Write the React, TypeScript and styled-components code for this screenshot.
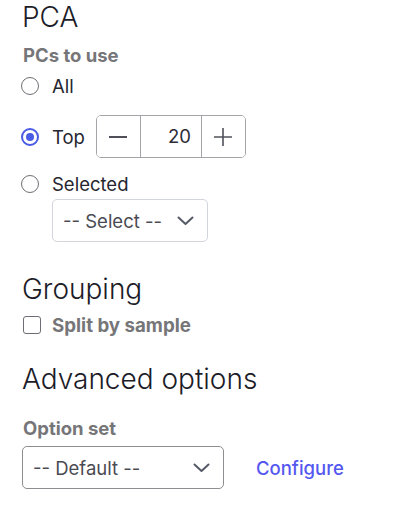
import styled, { createGlobalStyle } from "styled-components";

const GlobalStyle = createGlobalStyle`
  html, body {
    margin: 0;
    padding: 0;
    background: #ffffff;
  }
  body {
    font-family: Inter, "Noto Sans", "Liberation Sans", sans-serif;
    color: #22222e;
  }
`;

const Chevron = () => (
  <svg width="17" height="10" viewBox="0 0 17 10" fill="none">
    <polyline
      points="1.5,1.5 8.5,8 15.5,1.5"
      stroke="#555a66"
      strokeWidth="2"
      strokeLinecap="round"
      strokeLinejoin="round"
    />
  </svg>
);

const App = () => {
  return (
    <Page>
      <GlobalStyle />
      <Heading>PCA</Heading>
      <FieldLabel $top={10}>PCs to use</FieldLabel>

      <RadioRow $top={8}>
        <Radio />
        <OptionText>All</OptionText>
      </RadioRow>

      <RadioRow $top={17}>
        <Radio $checked />
        <OptionText>Top</OptionText>
        <Stepper>
          <StepButton aria-label="decrease">
            <svg width="18" height="18" viewBox="0 0 18 18">
              <line x1="0" y1="9" x2="18" y2="9" stroke="#50505a" strokeWidth="2" />
            </svg>
          </StepButton>
          <StepValue>20</StepValue>
          <StepButton aria-label="increase">
            <svg width="18" height="18" viewBox="0 0 18 18">
              <line x1="0" y1="9" x2="18" y2="9" stroke="#50505a" strokeWidth="1.6" />
              <line x1="9" y1="0" x2="9" y2="18" stroke="#50505a" strokeWidth="1.6" />
            </svg>
          </StepButton>
        </Stepper>
      </RadioRow>

      <RadioRow $top={14}>
        <Radio />
        <OptionText>Selected</OptionText>
      </RadioRow>

      <SelectBox $width={156} $light $indent={30} $top={3}>
        <span>-- Select --</span>
        <Chevron />
      </SelectBox>

      <Heading $top={30}>Grouping</Heading>
      <CheckRow $top={8}>
        <Checkbox />
        <CheckText>Split by sample</CheckText>
      </CheckRow>

      <Heading $top={26}>Advanced options</Heading>
      <FieldLabel $top={21}>Option set</FieldLabel>
      <SelectRow>
        <SelectBox $width={202}>
          <span>-- Default --</span>
          <Chevron />
        </SelectBox>
        <Link href="#">Configure</Link>
      </SelectRow>
    </Page>
  );
};

export default App;

const Page = styled.div`
  display: flex;
  flex-direction: column;
  align-items: flex-start;
  padding: 0 22px 20px 22px;
`;

const Heading = styled.h2<{ $top?: number }>`
  margin: ${({ $top }) => $top ?? 0}px 0 0 0;
  font-size: 28px;
  line-height: 34px;
  font-weight: 300;
  color: #1c1c28;
`;

const FieldLabel = styled.div<{ $top: number }>`
  margin-top: ${({ $top }) => $top}px;
  font-size: 18.5px;
  line-height: 22px;
  font-weight: 700;
  color: #767679;
  padding-left: 1px;
`;

const RadioRow = styled.div<{ $top: number }>`
  display: flex;
  align-items: center;
  margin-top: ${({ $top }) => $top}px;
  min-height: 24px;
`;

const Radio = styled.span<{ $checked?: boolean }>`
  box-sizing: border-box;
  width: 18px;
  height: 18px;
  margin-left: -1px;
  border-radius: 50%;
  border-style: solid;
  border-color: ${({ $checked }) => ($checked ? "#4a5be6" : "#6e6e74")};
  border-width: ${({ $checked }) => ($checked ? "2.5px" : "1.5px")};
  display: flex;
  align-items: center;
  justify-content: center;
  flex-shrink: 0;

  &::after {
    content: "";
    display: ${({ $checked }) => ($checked ? "block" : "none")};
    width: 8px;
    height: 8px;
    border-radius: 50%;
    background: #4a5be6;
  }
`;

const OptionText = styled.span`
  margin-left: 13px;
  font-size: 18.5px;
  line-height: 24px;
  color: #26262f;
`;

const Stepper = styled.div`
  display: flex;
  margin-left: 11px;
  height: 43px;
  border: 1px solid #a4a4a8;
  border-radius: 5px;
  box-sizing: border-box;
  overflow: hidden;
`;

const StepButton = styled.button`
  width: 43px;
  border: none;
  background: #ffffff;
  padding: 0;
  display: flex;
  align-items: center;
  justify-content: center;
  cursor: pointer;
`;

const StepValue = styled.div`
  width: 62px;
  box-sizing: border-box;
  border-left: 1px solid #a4a4a8;
  border-right: 1px solid #a4a4a8;
  text-align: right;
  padding-right: 10px;
  font-size: 18.5px;
  line-height: 41px;
  color: #2c2c36;
`;

const SelectBox = styled.div<{
  $width: number;
  $light?: boolean;
  $indent?: number;
  $top?: number;
}>`
  box-sizing: border-box;
  width: ${({ $width }) => $width}px;
  height: 43px;
  margin-left: ${({ $indent }) => $indent ?? 0}px;
  margin-top: ${({ $top }) => $top ?? 0}px;
  padding: 0 13px 0 10px;
  border: 1px solid ${({ $light }) => ($light ? "#d2d5dc" : "#8e8e92")};
  border-radius: 5px;
  display: flex;
  align-items: center;
  justify-content: space-between;
  font-size: 18.5px;
  color: #4a4a52;
`;

const CheckRow = styled.div<{ $top: number }>`
  display: flex;
  align-items: center;
  margin-top: ${({ $top }) => $top}px;
  height: 22px;
`;

const Checkbox = styled.span`
  box-sizing: border-box;
  width: 18px;
  height: 18px;
  border: 1.5px solid #6e6e74;
  border-radius: 3px;
  margin-left: 1px;
`;

const CheckText = styled.span`
  margin-left: 11px;
  font-size: 18.7px;
  font-weight: 700;
  color: #767679;
`;

const SelectRow = styled.div`
  display: flex;
  align-items: center;
  margin-top: 7px;
`;

const Link = styled.a`
  margin-left: 32px;
  font-size: 18.5px;
  font-weight: 500;
  color: #5558f0;
  text-decoration: none;
`;
